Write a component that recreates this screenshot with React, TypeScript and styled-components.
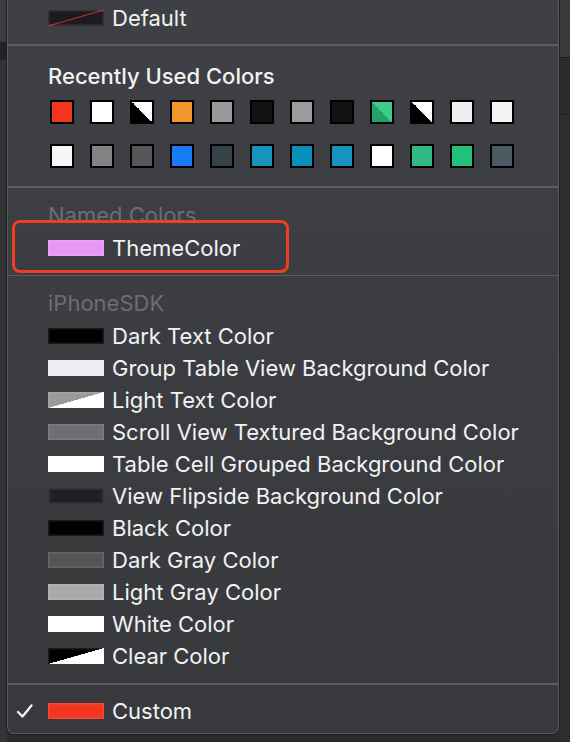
import React from "react";
import styled, { createGlobalStyle } from "styled-components";

const GlobalStyle = createGlobalStyle`
  html, body {
    margin: 0;
    padding: 0;
    background: #2a2a2c;
    overflow: hidden;
  }
  body {
    font-family: Inter, "Liberation Sans", sans-serif;
  }
`;

const Page = styled.div`
  width: 570px;
  height: 742px;
  display: flex;
  align-items: flex-start;
  background: #2a2a2c;
  overflow: hidden;
`;

const LeftStrip = styled.div`
  width: 7px;
  height: 742px;
  background: linear-gradient(#3d3e41 0, #3d3e41 42px, #232325 42px, #232325 60px, #333436 60px);
`;

const RightStrip = styled.div`
  flex: 1;
  height: 742px;
  background: linear-gradient(#3a3b3e 0, #3a3b3e 57px, #1a1a1b 57px, #1a1a1b 58px, #2c2c2e 58px, #2c2c2e 114px, #1a1a1b 114px, #1a1a1b 115px, #2d2d2f 115px);
`;

const Menu = styled.div`
  position: relative;
  width: 552px;
  height: 734px;
  box-sizing: border-box;
  display: flex;
  flex-direction: column;
  background: linear-gradient(#3f4045, #38393d);
  border: 1px solid #5c5d61;
  border-top: none;
  border-radius: 0 0 7px 7px;
  box-shadow: 0 1px 0 #1c1c1e, 1px 0 0 #1c1c1e, -1px 0 0 #1c1c1e;
  color: #f2f2f2;
`;

const Section = styled.div<{ $top: number; $bottom: number }>`
  display: flex;
  flex-direction: column;
  padding: ${(p) => p.$top}px 0 ${(p) => p.$bottom}px;
`;

const Separator = styled.div`
  height: 2px;
  background: #5d5e63;
`;

const Item = styled.div`
  position: relative;
  height: 32px;
  display: flex;
  align-items: center;
  padding-left: 40px;
  gap: 8px;
  font-size: 22px;
  white-space: nowrap;
`;

const Check = styled.svg`
  position: absolute;
  left: 8px;
  top: 8px;
`;

const Header = styled.div<{ $muted?: boolean }>`
  height: ${(p) => (p.$muted ? 34 : 32)}px;
  display: flex;
  align-items: center;
  padding-left: 40px;
  font-size: 22px;
  font-weight: ${(p) => (p.$muted ? 400 : 500)};
  color: ${(p) => (p.$muted ? "#6c6d72" : "#f2f2f2")};
`;

const Swatch = styled.div<{ $bg: string }>`
  width: 56px;
  height: 16px;
  flex-shrink: 0;
  background: ${(p) => p.$bg};
  box-shadow: inset 0 0 0 1.5px rgba(255, 255, 255, 0.1);
`;

const Grid = styled.div`
  display: grid;
  grid-template-columns: repeat(12, 24px);
  column-gap: 16px;
  row-gap: 20px;
  margin: 8px 0 0 42px;
`;

const Square = styled.div<{ $bg: string }>`
  width: 24px;
  height: 24px;
  box-sizing: border-box;
  border: 2px solid #000;
  background: ${(p) => p.$bg};
`;

const Highlight = styled.div`
  position: absolute;
  left: 4px;
  top: -12px;
  width: 277px;
  height: 53px;
  box-sizing: border-box;
  border: 3px solid #ef3f22;
  border-radius: 8px;
  pointer-events: none;
`;

const recent = [
  "#f5341f",
  "#ffffff",
  "linear-gradient(to top right, #000 50%, #fff 50%)",
  "#f3952b",
  "#9a9a9a",
  "#121212",
  "#9b9b9b",
  "#121212",
  "linear-gradient(to top right, #22a564 50%, #3fca8b 50%)",
  "linear-gradient(to top right, #000 50%, #fff 50%)",
  "#efefef",
  "#f3f3f3",
  "#f6f6f6",
  "#828282",
  "#545657",
  "#1a7bf6",
  "#36414a",
  "#1894bc",
  "#0a90bd",
  "#1893bd",
  "#ffffff",
  "#31b985",
  "#20c17a",
  "#4b5963",
];

const sdkColors = [
  { name: "Dark Text Color", bg: "#000" },
  { name: "Group Table View Background Color", bg: "#ededf3" },
  { name: "Light Text Color", bg: "linear-gradient(to bottom right, #9a9a9a 50%, #fff 50%)" },
  { name: "Scroll View Textured Background Color", bg: "#6d6e75" },
  { name: "Table Cell Grouped Background Color", bg: "#fff" },
  { name: "View Flipside Background Color", bg: "#1f2024" },
  { name: "Black Color", bg: "#000" },
  { name: "Dark Gray Color", bg: "#545454" },
  { name: "Light Gray Color", bg: "#aaaaaa" },
  { name: "White Color", bg: "#fff" },
  { name: "Clear Color", bg: "linear-gradient(to bottom right, #000 50%, #fff 50%)" },
];

const App = () => {
  return (
    <Page>
      <GlobalStyle />
      <LeftStrip />
      <Menu>
        <Section $top={2} $bottom={10}>
          <Item>
            <Swatch $bg="linear-gradient(to bottom right, #1c1c1e calc(50% - 1px), #c8283a 50%, #1c1c1e calc(50% + 1px))" />
            Default
          </Item>
        </Section>
        <Separator />
        <Section $top={14} $bottom={18}>
          <Header>Recently Used Colors</Header>
          <Grid>
            {recent.map((bg, i) => (
              <Square key={i} $bg={bg} />
            ))}
          </Grid>
        </Section>
        <Separator />
        <Section $top={10} $bottom={11}>
          <Header $muted>Named Colors</Header>
          <Item>
            <Highlight />
            <Swatch $bg="#e698f4" />
            ThemeColor
          </Item>
        </Section>
        <Separator />
        <Section $top={10} $bottom={11}>
          <Header $muted>iPhoneSDK</Header>
          {sdkColors.map((c) => (
            <Item key={c.name}>
              <Swatch $bg={c.bg} />
              {c.name}
            </Item>
          ))}
        </Section>
        <Separator />
        <Section $top={10} $bottom={6}>
          <Item>
            <Check width="18" height="16" viewBox="0 0 18 16">
              <path d="M2 9 L6.5 13.5 L15.5 2.5" fill="none" stroke="#f2f2f2" strokeWidth="2.4" strokeLinecap="round" strokeLinejoin="round" />
            </Check>
            <Swatch $bg="#f4361f" />
            Custom
          </Item>
        </Section>
      </Menu>
      <RightStrip />
    </Page>
  );
};

export default App;
